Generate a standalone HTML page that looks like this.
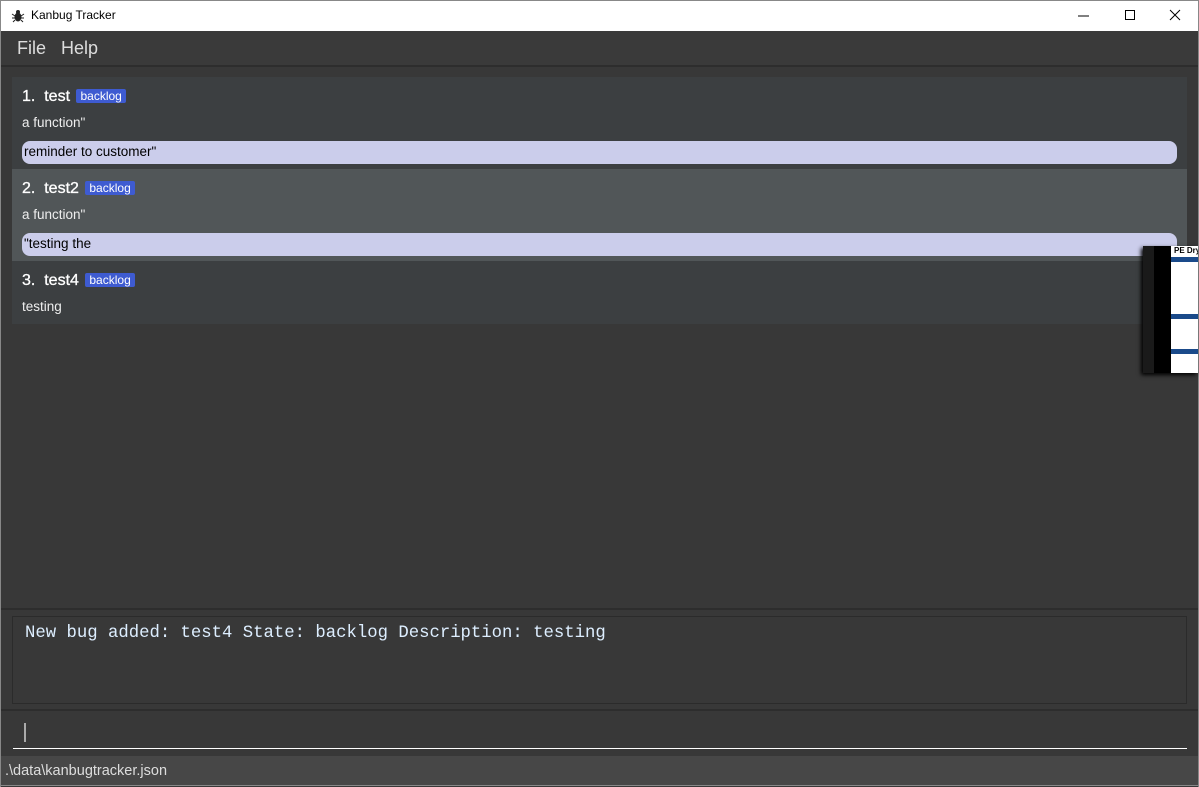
<!DOCTYPE html>
<html><head><style>
*{margin:0;padding:0;box-sizing:border-box}
body{width:1199px;height:787px;overflow:hidden;background:#383838;font-family:"Segoe UI","Liberation Sans",sans-serif;position:relative}
.abs{position:absolute}
.title{left:0;top:0;width:1199px;height:31px;background:#fff;border:1px solid #888;border-bottom:none}
.title span{position:absolute;left:30px;top:7px;font-size:12px;color:#000}
.menu{left:1px;top:31px;width:1197px;height:36px;background:#3a3a3a;border-bottom:2px solid #2d2d2d}
.menu span{position:absolute;top:7px;font-size:18px;color:#ddd}
.card{left:12px;width:1175px;color:#fff}
.card .h{position:absolute;left:10px;top:11px;font-size:16px;font-weight:normal;color:#fff;white-space:nowrap;-webkit-text-stroke:0.3px #fff}
.tag{display:inline-block;background:#3e5bd1;color:#fff;font-size:12px;font-weight:normal;padding:0 4px;border-radius:2px;margin-left:2px;vertical-align:1px;-webkit-text-stroke:0}
.card .d{position:absolute;left:10px;top:38px!important;font-size:13.5px;color:#eee}
.pill{position:absolute;left:10px;width:1155px;height:23px;background:#cbcdeb;border-radius:8px;color:#000;font-size:13.5px;padding:3px 2px}
</style></head><body>
<div class="abs title"><svg class="abs" style="left:10px;top:8px" width="14" height="14" viewBox="0 0 14 14"><ellipse cx="7" cy="8" rx="3.5" ry="4.5" fill="#222"/><circle cx="7" cy="3" r="2" fill="#222"/><path d="M1 5l3 2M13 5l-3 2M1 9h3M13 9h-3M2 13l2-2M12 13l-2-2" stroke="#222"/></svg><span>Kanbug Tracker</span>
<svg class="abs" style="left:1070px;top:8px" width="120" height="14"><path d="M7 7h11" stroke="#000"/><rect x="54.5" y="1.5" width="9" height="9" fill="none" stroke="#000"/><path d="M99 1l10 10M109 1l-10 10" stroke="#000"/></svg></div>
<div class="abs" style="left:0;top:31px;width:1px;height:756px;background:#888"></div>
<div class="abs" style="right:0;top:31px;width:1px;height:756px;background:#888"></div>
<div class="abs menu"><span style="left:16px">File</span><span style="left:60px">Help</span></div>
<div class="abs card" style="top:77px;height:92px;background:#3c3f41"><div class="h">1.&nbsp; test <span class="tag">backlog</span></div><div class="d">a function"</div><div class="pill" style="top:64px">reminder to customer"</div></div>
<div class="abs card" style="top:169px;height:92px;background:#515658"><div class="h">2.&nbsp; test2 <span class="tag">backlog</span></div><div class="d">a function"</div><div class="pill" style="top:64px">"testing the</div></div>
<div class="abs card" style="top:261px;height:63px;background:#3c3f41"><div class="h">3.&nbsp; test4 <span class="tag">backlog</span></div><div class="d">testing</div></div>
<div class="abs" style="left:1143px;top:246px;width:55px;height:127px;background:#1a1a1a;box-shadow:-2px 2px 4px #000"><div class="abs" style="left:11px;top:0;width:44px;height:127px;background:#000"></div><div class="abs" style="left:28px;top:0;width:27px;height:127px;background:#fff;font-size:8px;font-weight:bold;padding-left:3px;white-space:nowrap;overflow:hidden">PE Dry<div style="background:#1a4a8a;height:5px;margin:2px 0 52px -3px"></div><div style="background:#1a4a8a;height:5px;margin:0 0 30px -3px"></div><div style="background:#1a4a8a;height:5px;margin-left:-3px"></div></div></div>
<div class="abs" style="left:1px;top:608px;width:1197px;height:103px;background:#383838;border-top:2px solid #2d2d2d;border-bottom:2px solid #2d2d2d"></div>
<div class="abs" style="left:12px;top:616px;width:1175px;height:88px;border:1px solid #2b2b2b"></div>
<div class="abs" style="left:25px;top:624px;font-family:'Liberation Mono',monospace;font-size:17.3px;color:#ddeeff;white-space:nowrap">New bug added: test4 State: backlog Description: testing</div>
<div class="abs" style="left:24px;top:723px;width:2px;height:19px;background:#aaa"></div>
<div class="abs" style="left:13px;top:748px;width:1174px;height:1px;background:#fff"></div>
<div class="abs" style="left:1px;top:756px;width:1197px;height:30px;background:#474747;border-bottom:1px solid #888"></div>
<div class="abs" style="left:5px;top:763px;font-size:14.5px;color:#ddd">.\data\kanbugtracker.json</div>
</body></html>
